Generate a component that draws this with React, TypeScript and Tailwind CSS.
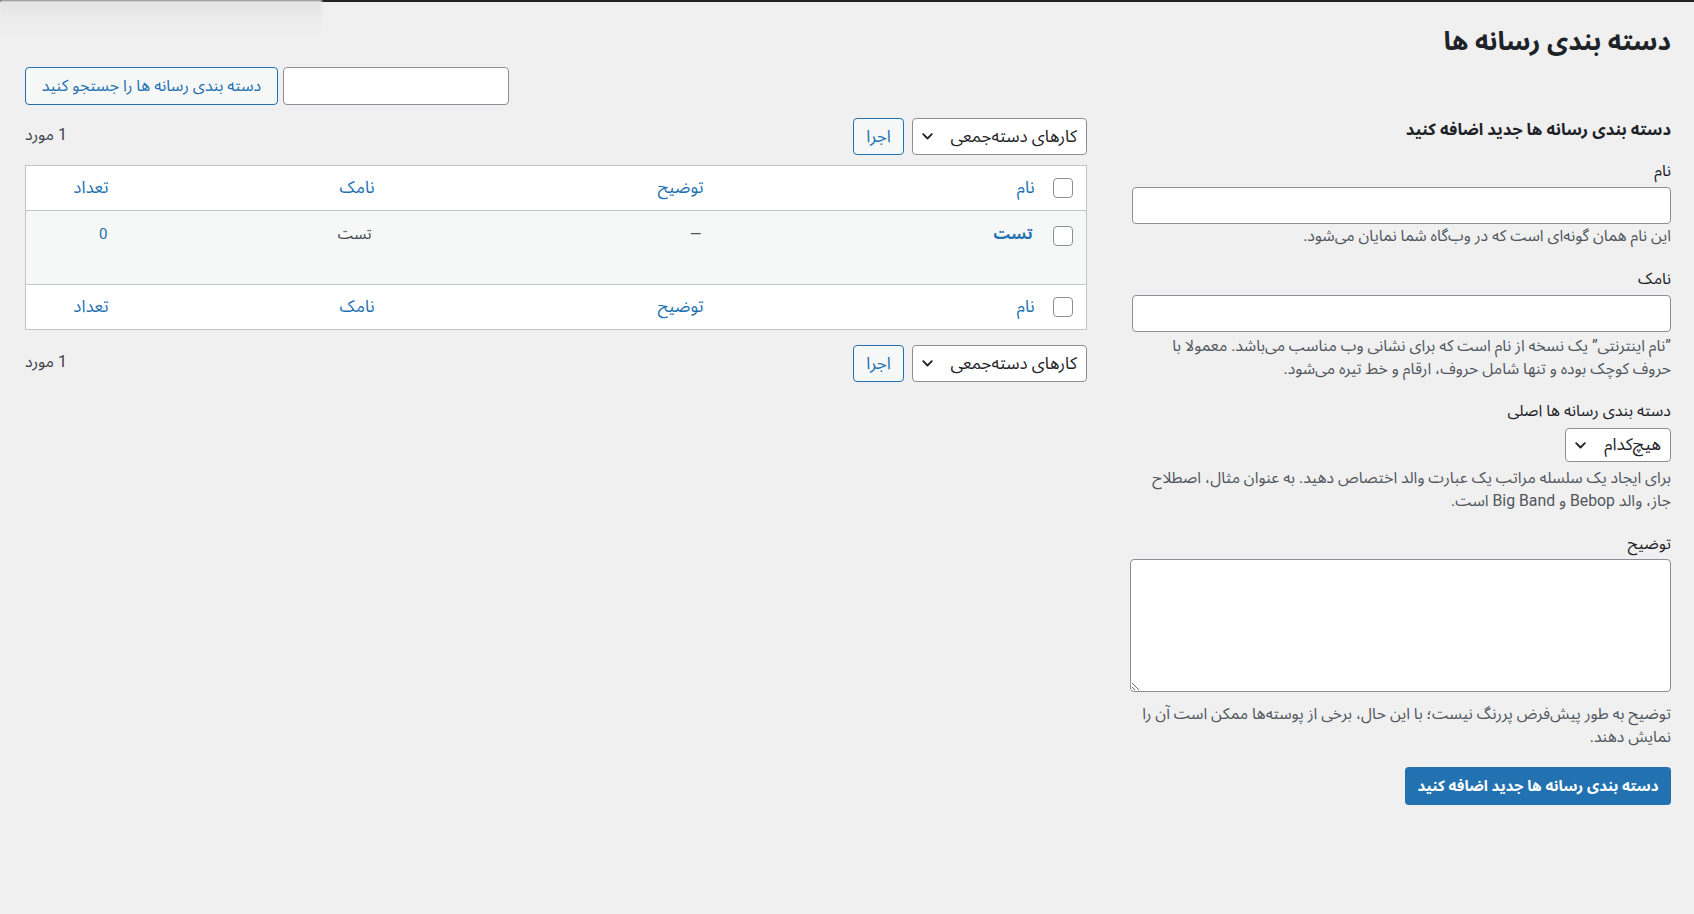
import React from "react";

const Chevron = () => (
  <svg width="11" height="7" viewBox="0 0 11 7" fill="none" className="shrink-0">
    <path d="M1.2 1.2l4.3 4.3 4.3-4.3" stroke="#1d2327" strokeWidth="1.8" strokeLinecap="round" strokeLinejoin="round" />
  </svg>
);

const Check = () => (
  <input type="checkbox" className="block appearance-none w-5 h-5 rounded-[4px] border border-[#8c8f94] bg-white" />
);

const BulkBar = ({ className = "" }: { className?: string }) => (
  <div className={"flex items-center " + className}>
    <div className="flex items-center justify-between w-[175px] h-[37px] pr-[9px] pl-[9px] bg-white border border-[#8c8f94] rounded-[4px] text-[17px]">
      <span>کارهای دسته‌جمعی</span>
      <Chevron />
    </div>
    <button className="mr-2 w-[51px] h-[37px] rounded-[4px] border border-[#2271b1] bg-[#f6f7f7] text-[#2271b1] text-[17px]">
      اجرا
    </button>
    <span className="mr-auto text-[16px] text-[#3c434a] -mt-[3px]">1 مورد</span>
  </div>
);

const HeadRow = ({ top = false }: { top?: boolean }) => (
  <tr className={top ? "" : "border-t border-[#c3c4c7]"}>
    <th className="h-[45px] pr-[13px] align-middle">
      <Check />
    </th>
    <th className="pr-[10px] text-right font-normal text-[17px] text-[#2271b1]">نام</th>
    <th className="pr-[10px] text-right font-normal text-[17px] text-[#2271b1]">توضیح</th>
    <th className="pr-[10px] text-right font-normal text-[17px] text-[#2271b1]">نامک</th>
    <th className="pr-[10px] text-right font-normal text-[17px] text-[#2271b1]">تعداد</th>
  </tr>
);

const Field = ({ label, children, className = "" }: { label: string; children: React.ReactNode; className?: string }) => (
  <div className={className}>
    <label className="block text-[16px] leading-5 text-[#1d2327]">{label}</label>
    {children}
  </div>
);

const Help = ({ children, className = "" }: { children: React.ReactNode; className?: string }) => (
  <p className={"text-[15.8px] leading-[23px] text-[#50575e] " + className}>{children}</p>
);

export default function App() {
  return (
    <div
      dir="rtl"
      className="relative min-h-screen bg-[#f0f0f1] border-t-2 border-[#1d2327] text-[#1d2327] font-[Roboto,'Noto_Sans_Arabic','DejaVu_Sans',sans-serif]"
    >
      <div className="absolute -top-0.5 left-0 w-[322px] h-[40px] bg-gradient-to-b from-[#e3e3e3] via-[#ececec] to-[#f0f0f1] blur-[1px]" />

      <div className="pr-[23px] pl-[25px] pt-[23px]">
        <h1 className="text-[26px] font-bold leading-[32px]">دسته بندی رسانه ها</h1>

        <div className="flex gap-[43px] mt-[10px]">
          {/* add new form */}
          <div className="w-[541px] shrink-0 pt-[51px]">
            <h2 className="text-[16.5px] font-bold leading-6">دسته بندی رسانه ها جدید اضافه کنید</h2>

            <Field label="نام" className="mt-[19px]">
              <input className="block mt-[6px] w-[539px] h-[37px] bg-white border border-[#8c8f94] rounded-[4px]" />
              <Help>این نام همان گونه‌ای است که در وب‌گاه شما نمایان می‌شود.</Help>
            </Field>

            <Field label="نامک" className="mt-[22px]">
              <input className="block mt-[6px] w-[539px] h-[37px] bg-white border border-[#8c8f94] rounded-[4px]" />
              <Help className="mt-[2px]">
                ”نام اینترنتی” یک نسخه از نام است که برای نشانی وب مناسب می‌باشد. معمولا با
                <br />
                حروف کوچک بوده و تنها شامل حروف، ارقام و خط تیره می‌شود.
              </Help>
            </Field>

            <Field label="دسته بندی رسانه ها اصلی" className="mt-[21px]">
              <div className="mt-[7px] flex items-center justify-between w-[106px] h-[34px] pr-[9px] pl-[9px] bg-white border border-[#8c8f94] rounded-[4px] text-[17px]">
                <span>هیچ‌کدام</span>
                <Chevron />
              </div>
              <Help className="mt-[4px]">
                برای ایجاد یک سلسله مراتب یک عبارت والد اختصاص دهید. به عنوان مثال، اصطلاح
                <br />
                جاز، والد Bebop و Big Band است.
              </Help>
            </Field>

            <Field label="توضیح" className="mt-[22px]">
              <textarea dir="rtl" className="block mt-[5px] w-full h-[133px] bg-white border border-[#8c8f94] rounded-[4px]" />
              <Help className="mt-[10px]">
                توضیح به طور پیش‌فرض پررنگ نیست؛ با این حال، برخی از پوسته‌ها ممکن است آن را
                <br />
                نمایش دهند.
              </Help>
            </Field>

            <button className="mt-[19px] w-[266px] h-[38px] rounded-[4px] bg-[#2271b1] text-white text-[15px] font-bold">
              دسته بندی رسانه ها جدید اضافه کنید
            </button>
          </div>

          {/* list table */}
          <div className="flex-1">
            <div className="flex justify-end gap-[5px]">
              <input className="w-[226px] h-[38px] bg-white border border-[#8c8f94] rounded-[4px]" />
              <button className="w-[253px] h-[38px] rounded-[4px] border border-[#2271b1] bg-[#f6f7f7] text-[#2271b1] text-[16px]">
                دسته بندی رسانه ها را جستجو کنید
              </button>
            </div>

            <BulkBar className="mt-[13px]" />

            <table className="mt-[10px] w-full table-fixed border border-[#c3c4c7] bg-white border-collapse">
              <colgroup>
                <col className="w-[42px]" />
                <col className="w-[331px]" />
                <col className="w-[329px]" />
                <col className="w-[266px]" />
                <col />
              </colgroup>
              <thead>
                <HeadRow top />
              </thead>
              <tbody>
                <tr className="border-t border-[#c3c4c7] bg-[#f6f7f7] h-[74px]">
                  <td className="pr-[13px] pt-[15px] align-top">
                    <Check />
                  </td>
                  <td className="pr-[12px] pt-[11px] align-top text-[15.5px] font-bold text-[#2271b1] leading-6">تست</td>
                  <td className="pr-[12px] pt-[11px] align-top text-[15px] text-[#50575e] leading-6">—</td>
                  <td className="pr-[13px] pt-[11px] align-top text-[15px] text-[#3c434a] leading-6">تست</td>
                  <td className="pr-[11px] pt-[11px] align-top text-[15px] text-[#2271b1] leading-6">0</td>
                </tr>
              </tbody>
              <tfoot>
                <HeadRow />
              </tfoot>
            </table>

            <BulkBar className="mt-[15px]" />
          </div>
        </div>
      </div>
    </div>
  );
}
